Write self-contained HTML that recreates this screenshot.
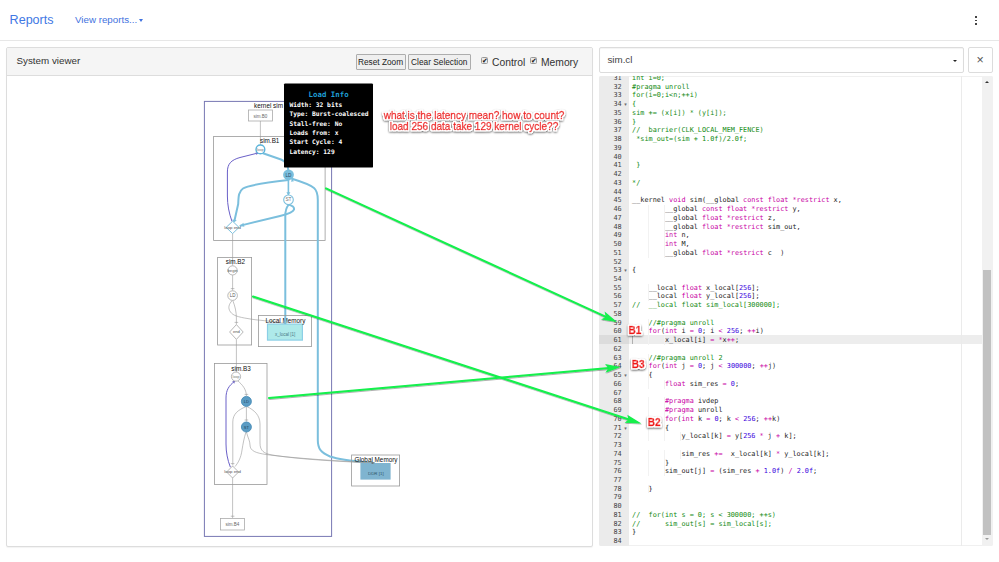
<!DOCTYPE html>
<html lang="en">
<head>
<meta charset="utf-8">
<title>Reports</title>
<style>
*{box-sizing:border-box}
html,body{margin:0;padding:0}
body{width:999px;height:562px;overflow:hidden;background:#fff;position:relative;font-family:"Liberation Sans",Arial,sans-serif;color:#333}
.abs{position:absolute}
#hdr{left:0;top:0;width:999px;height:41px;border-bottom:1px solid #e7e7e7;background:#fff}
#brand{left:9.6px;top:12.8px;font-size:12.55px;line-height:14px;color:#4178e4;white-space:nowrap}
#vr{left:75px;top:14px;font-size:9.75px;line-height:11px;color:#3f72e0;white-space:nowrap}
#vr b{display:inline-block;width:0;height:0;border-left:2.6px solid transparent;border-right:2.6px solid transparent;border-top:3px solid #3f72e0;vertical-align:1.1px;margin-left:2px}
.dot{width:1.8px;height:1.8px;background:#444;left:975.4px}
#lp{left:6px;top:47px;width:587px;height:499.5px;border:1px solid #ddd;border-radius:2px;background:#fff;box-shadow:0 1px 1px rgba(0,0,0,.05)}
#lph{left:0;top:0;width:585px;height:28px;background:#f5f5f5;border-bottom:1px solid #ddd;border-radius:1px 1px 0 0}
#sv{left:9.5px;top:6.6px;font-size:9.8px;line-height:12px;color:#333;white-space:nowrap}
.btn{top:6.2px;height:15.5px;border:1px solid #adadad;background:#efefef;border-radius:1px;font-size:8.3px;line-height:15.2px;color:#222;text-align:center;white-space:nowrap}
.cb{top:9.4px;width:7px;height:7px;border:1px solid #9a9a9a;border-radius:1.5px;background:#eaeaea;font-size:6.5px;line-height:5.4px;font-weight:normal;color:#111;text-align:center;overflow:hidden}
.cbl{top:8.7px;font-size:10.3px;line-height:12px;color:#333;white-space:nowrap}
#sel{left:599px;top:47px;width:365px;height:25.5px;border:1px solid #dcdcdc;border-radius:2px;background:#fff;box-shadow:inset 0 1px 1px rgba(0,0,0,.05)}
#selt{left:7.4px;top:6px;font-size:9.8px;line-height:12px;color:#444}
#selc{left:352.6px;top:11.6px;width:0;height:0;border-left:2.7px solid transparent;border-right:2.7px solid transparent;border-top:2.8px solid #222}
#cls{left:968px;top:47px;width:24.5px;height:25.5px;border:1px solid #dcdcdc;border-radius:2px;background:#fff;text-align:center;font-size:12.5px;line-height:24.4px;color:#555}
#ed{left:599px;top:75.7px;width:393.5px;height:470.3px;border-radius:2px;box-shadow:inset 0 0 0 1px rgba(0,0,0,.06);overflow:hidden;background:#fff;font-family:"DejaVu Sans Mono","Liberation Mono",monospace;font-size:6.84px}
#gut{left:0;top:0;width:29.6px;height:471px;background:#ebebeb}
.g{position:absolute;left:0;width:29.6px;height:8.74px;line-height:8.74px;padding-right:6.9px;text-align:right;color:#444;white-space:nowrap}
#ga{left:0;width:29.6px;height:8.5px;background:#dcdcdc}
.f{position:absolute;right:1.9px;top:0;font-size:5px;font-weight:normal;color:#6a6a6a;font-family:"DejaVu Sans",sans-serif}
.l{position:absolute;left:33.1px;height:8.74px;line-height:8.74px;white-space:pre;color:#1c1c1c}
.l i{font-style:normal}
.c{color:#118a11}.k{color:#c800a4}.n{color:#3a00dc}
#act{left:29.6px;width:353.4px;height:8.5px;background:#ededed}
#pm{left:361.6px;top:0;width:1px;height:471px;background:#ebebeb}
#sb{left:383px;top:0;width:10.5px;height:470px;background:#f1f1f1}
#sbt{left:1.2px;top:194.3px;width:7.6px;height:264.7px;background:#c1c1c1}
.ig{position:absolute;width:1px;height:8.74px;background:#f2f2f2}
#cur{left:33.2px;width:1px;height:8px;background:#b0b0b0}
#ov{left:0;top:0;width:999px;height:562px;pointer-events:none}
</style>
</head>
<body>
<div id="hdr" class="abs"></div>
<div id="brand" class="abs">Reports</div>
<div id="vr" class="abs">View reports...<b></b></div>
<div class="abs dot" style="top:16px"></div>
<div class="abs dot" style="top:19.5px"></div>
<div class="abs dot" style="top:23px"></div>

<div id="lp" class="abs">
  <div id="lph" class="abs">
    <div id="sv" class="abs">System viewer</div>
    <div class="abs btn" style="left:348.5px;width:50px">Reset Zoom</div>
    <div class="abs btn" style="left:401px;width:62.5px">Clear Selection</div>
    <div class="abs cb" style="left:474px">✔</div>
    <div class="abs cbl" style="left:485px">Control</div>
    <div class="abs cb" style="left:523px">✔</div>
    <div class="abs cbl" style="left:534px">Memory</div>
  </div>
</div>

<div id="sel" class="abs"><div id="selt" class="abs">sim.cl</div><div id="selc" class="abs"></div></div>
<div id="cls" class="abs">×</div>

<div id="ed" class="abs">
  <div id="act" class="abs" style="top:259.69px"></div>
  <div id="pm" class="abs"></div>
  <div id="cur" class="abs" style="top:260.49px"></div>
  <div id="gut" class="abs"><div id="ga" class="abs" style="top:259.69px"></div>
<div class="g" style="top:-1.71px">31</div>
<div class="g" style="top:7.03px">32</div>
<div class="g" style="top:15.77px">33</div>
<div class="g" style="top:24.51px">34<b class="f">▾</b></div>
<div class="g" style="top:33.25px">35</div>
<div class="g" style="top:41.99px">36</div>
<div class="g" style="top:50.73px">37</div>
<div class="g" style="top:59.47px">38</div>
<div class="g" style="top:68.21px">39</div>
<div class="g" style="top:76.95px">40</div>
<div class="g" style="top:85.69px">41</div>
<div class="g" style="top:94.43px">42</div>
<div class="g" style="top:103.17px">43</div>
<div class="g" style="top:111.91px">44</div>
<div class="g" style="top:120.65px">45</div>
<div class="g" style="top:129.39px">46</div>
<div class="g" style="top:138.13px">47</div>
<div class="g" style="top:146.87px">48</div>
<div class="g" style="top:155.61px">49</div>
<div class="g" style="top:164.35px">50</div>
<div class="g" style="top:173.09px">51</div>
<div class="g" style="top:181.83px">52</div>
<div class="g" style="top:190.57px">53<b class="f">▾</b></div>
<div class="g" style="top:199.31px">54</div>
<div class="g" style="top:208.05px">55</div>
<div class="g" style="top:216.79px">56</div>
<div class="g" style="top:225.53px">57</div>
<div class="g" style="top:234.27px">58</div>
<div class="g" style="top:243.01px">59</div>
<div class="g" style="top:251.75px">60</div>
<div class="g a" style="top:260.49px">61</div>
<div class="g" style="top:269.23px">62</div>
<div class="g" style="top:277.97px">63</div>
<div class="g" style="top:286.71px">64</div>
<div class="g" style="top:295.45px">65<b class="f">▾</b></div>
<div class="g" style="top:304.19px">66</div>
<div class="g" style="top:312.93px">67</div>
<div class="g" style="top:321.67px">68</div>
<div class="g" style="top:330.41px">69</div>
<div class="g" style="top:339.15px">70</div>
<div class="g" style="top:347.89px">71<b class="f">▾</b></div>
<div class="g" style="top:356.63px">72</div>
<div class="g" style="top:365.37px">73</div>
<div class="g" style="top:374.11px">74</div>
<div class="g" style="top:382.85px">75</div>
<div class="g" style="top:391.59px">76</div>
<div class="g" style="top:400.33px">77</div>
<div class="g" style="top:409.07px">78</div>
<div class="g" style="top:417.81px">79</div>
<div class="g" style="top:426.55px">80</div>
<div class="g" style="top:435.29px">81</div>
<div class="g" style="top:444.03px">82</div>
<div class="g" style="top:452.77px">83</div>
<div class="g" style="top:461.51px">84</div>
  </div>
  <div id="code">
<div class="l" style="top:-1.71px"><i class="c">int i=0;</i></div>
<div class="l" style="top:7.03px"><i class="c">#pragma unroll</i></div>
<div class="l" style="top:15.77px"><i class="c">for(i=0;i&lt;n;++i)</i></div>
<div class="l" style="top:24.51px"><i class="c">{</i></div>
<div class="l" style="top:33.25px"><i class="c">sim += (x[i]) * (y[i]);</i></div>
<div class="l" style="top:41.99px"><i class="c">}</i></div>
<div class="l" style="top:50.73px"><i class="c">//  barrier(CLK_LOCAL_MEM_FENCE)</i></div>
<div class="l" style="top:59.47px"><i class="c"> *sim_out=(sim + 1.0f)/2.0f;</i></div>
<div class="l" style="top:68.21px"></div>
<div class="l" style="top:76.95px"></div>
<div class="l" style="top:85.69px"><i class="c"> }</i></div>
<div class="l" style="top:94.43px"></div>
<div class="l" style="top:103.17px"><i class="c">*/</i></div>
<div class="l" style="top:111.91px"></div>
<div class="l" style="top:120.65px">__kernel <i class="k">void</i> sim(__global <i class="k">const</i> <i class="k">float</i> <i class="k">*</i><i class="k">restrict</i> x,</div>
<div class="l" style="top:129.39px">        __global <i class="k">const</i> <i class="k">float</i> <i class="k">*</i><i class="k">restrict</i> y,</div>
<div class="l" style="top:138.13px">        __global <i class="k">float</i> <i class="k">*</i><i class="k">restrict</i> z,</div>
<div class="l" style="top:146.87px">        __global <i class="k">float</i> <i class="k">*</i><i class="k">restrict</i> sim_out,</div>
<div class="l" style="top:155.61px">        <i class="k">int</i> n,</div>
<div class="l" style="top:164.35px">        <i class="k">int</i> M,</div>
<div class="l" style="top:173.09px">        __global <i class="k">float</i> <i class="k">*</i><i class="k">restrict</i> c  )</div>
<div class="l" style="top:181.83px"></div>
<div class="l" style="top:190.57px">{</div>
<div class="l" style="top:199.31px"></div>
<div class="l" style="top:208.05px">    __local <i class="k">float</i> x_local[<i class="n">256</i>];</div>
<div class="l" style="top:216.79px">    __local <i class="k">float</i> y_local[<i class="n">256</i>];</div>
<div class="l" style="top:225.53px"><i class="c">//  __local float sim_local[300000];</i></div>
<div class="l" style="top:234.27px"></div>
<div class="l" style="top:243.01px">    <i class="c">//#pragma unroll</i></div>
<div class="l" style="top:251.75px">    <i class="k">for</i>(<i class="k">int</i> i <i class="k">=</i> <i class="n">0</i>; i <i class="k">&lt;</i> <i class="n">256</i>; <i class="k">++</i>i)</div>
<div class="l" style="top:260.49px">        x_local[i] <i class="k">=</i> <i class="k">*</i>x<i class="k">++</i>;</div>
<div class="l" style="top:269.23px"></div>
<div class="l" style="top:277.97px">    <i class="c">//#pragma unroll 2</i></div>
<div class="l" style="top:286.71px">    <i class="k">for</i>(<i class="k">int</i> j <i class="k">=</i> <i class="n">0</i>; j <i class="k">&lt;</i> <i class="n">300000</i>; <i class="k">++</i>j)</div>
<div class="l" style="top:295.45px">    {</div>
<div class="l" style="top:304.19px">        <i class="k">float</i> sim_res <i class="k">=</i> <i class="n">0</i>;</div>
<div class="l" style="top:312.93px"></div>
<div class="l" style="top:321.67px">        <i class="k">#pragma</i> ivdep</div>
<div class="l" style="top:330.41px">        <i class="k">#pragma</i> unroll</div>
<div class="l" style="top:339.15px">        <i class="k">for</i>(<i class="k">int</i> k <i class="k">=</i> <i class="n">0</i>; k <i class="k">&lt;</i> <i class="n">256</i>; <i class="k">++</i>k)</div>
<div class="l" style="top:347.89px">        {</div>
<div class="l" style="top:356.63px">            y_local[k] <i class="k">=</i> y[<i class="n">256</i> <i class="k">*</i> j <i class="k">+</i> k];</div>
<div class="l" style="top:365.37px"></div>
<div class="l" style="top:374.11px">            sim_res <i class="k">+=</i>  x_local[k] <i class="k">*</i> y_local[k];</div>
<div class="l" style="top:382.85px">        }</div>
<div class="l" style="top:391.59px">        sim_out[j] <i class="k">=</i> (sim_res <i class="k">+</i> <i class="n">1.0f</i>) <i class="k">/</i> <i class="n">2.0f</i>;</div>
<div class="l" style="top:400.33px"></div>
<div class="l" style="top:409.07px">    }</div>
<div class="l" style="top:417.81px"></div>
<div class="l" style="top:426.55px"></div>
<div class="l" style="top:435.29px"><i class="c">//  for(int s = 0; s &lt; 300000; ++s)</i></div>
<div class="l" style="top:444.03px"><i class="c">//      sim_out[s] = sim_local[s];</i></div>
<div class="l" style="top:452.77px">}</div>
<div class="l" style="top:461.51px"></div>
<b class="ig" style="left:48.52px;top:129.39px"></b><b class="ig" style="left:64.94px;top:129.39px"></b><b class="ig" style="left:48.52px;top:138.13px"></b><b class="ig" style="left:64.94px;top:138.13px"></b><b class="ig" style="left:48.52px;top:146.87px"></b><b class="ig" style="left:64.94px;top:146.87px"></b><b class="ig" style="left:48.52px;top:155.61px"></b><b class="ig" style="left:64.94px;top:155.61px"></b><b class="ig" style="left:48.52px;top:164.35px"></b><b class="ig" style="left:64.94px;top:164.35px"></b><b class="ig" style="left:48.52px;top:173.09px"></b><b class="ig" style="left:64.94px;top:173.09px"></b><b class="ig" style="left:48.52px;top:208.05px"></b><b class="ig" style="left:48.52px;top:216.79px"></b><b class="ig" style="left:48.52px;top:243.01px"></b><b class="ig" style="left:48.52px;top:251.75px"></b><b class="ig" style="left:48.52px;top:260.49px"></b><b class="ig" style="left:64.94px;top:260.49px"></b><b class="ig" style="left:48.52px;top:277.97px"></b><b class="ig" style="left:48.52px;top:286.71px"></b><b class="ig" style="left:48.52px;top:295.45px"></b><b class="ig" style="left:48.52px;top:304.19px"></b><b class="ig" style="left:64.94px;top:304.19px"></b><b class="ig" style="left:48.52px;top:321.67px"></b><b class="ig" style="left:64.94px;top:321.67px"></b><b class="ig" style="left:48.52px;top:330.41px"></b><b class="ig" style="left:64.94px;top:330.41px"></b><b class="ig" style="left:48.52px;top:339.15px"></b><b class="ig" style="left:64.94px;top:339.15px"></b><b class="ig" style="left:48.52px;top:347.89px"></b><b class="ig" style="left:64.94px;top:347.89px"></b><b class="ig" style="left:48.52px;top:356.63px"></b><b class="ig" style="left:64.94px;top:356.63px"></b><b class="ig" style="left:81.36px;top:356.63px"></b><b class="ig" style="left:48.52px;top:374.11px"></b><b class="ig" style="left:64.94px;top:374.11px"></b><b class="ig" style="left:81.36px;top:374.11px"></b><b class="ig" style="left:48.52px;top:382.85px"></b><b class="ig" style="left:64.94px;top:382.85px"></b><b class="ig" style="left:48.52px;top:391.59px"></b><b class="ig" style="left:64.94px;top:391.59px"></b><b class="ig" style="left:48.52px;top:409.07px"></b>
  </div>
  <div id="sb" class="abs"><div id="sbt" class="abs"></div>
    <div class="abs" style="left:2.5px;top:4.9px;width:0;height:0;border-left:2.7px solid transparent;border-right:2.7px solid transparent;border-bottom:2.8px solid #333"></div>
    <div class="abs" style="left:2.5px;top:462.2px;width:0;height:0;border-left:2.7px solid transparent;border-right:2.7px solid transparent;border-top:2.8px solid #999"></div>
  </div>
</div>

<svg id="ov" class="abs" width="999" height="562" viewBox="0 0 999 562">
<defs>
<filter id="sh" x="-10%" y="-30%" width="120%" height="170%"><feDropShadow dx="0.7" dy="0.9" stdDeviation="0.7" flood-color="#000" flood-opacity="0.45"/></filter>
<filter id="sh2" x="-5%" y="-5%" width="110%" height="110%"><feDropShadow dx="0.6" dy="0.9" stdDeviation="0.6" flood-color="#000" flood-opacity="0.35"/></filter>
<filter id="ol" x="-5%" y="-5%" width="110%" height="110%">
<feMorphology in="SourceAlpha" operator="dilate" radius="1.2" result="d"/>
<feGaussianBlur in="d" stdDeviation="0.35" result="db"/>
<feComponentTransfer in="db" result="dc"><feFuncA type="linear" slope="2.2" intercept="0"/></feComponentTransfer>
<feFlood flood-color="#fff"/><feComposite in2="dc" operator="in" result="w"/>
<feGaussianBlur in="d" stdDeviation="1" result="sb"/>
<feOffset in="sb" dx="0.4" dy="1.2" result="so"/>
<feComponentTransfer in="so" result="s"><feFuncA type="linear" slope="0.8"/></feComponentTransfer>
<feMerge><feMergeNode in="s"/><feMergeNode in="w"/><feMergeNode in="SourceGraphic"/></feMerge>
</filter>
</defs>
<g font-family="'Liberation Sans',Arial,sans-serif" fill="none">
<!-- kernel box -->
<rect x="204.4" y="101.4" width="127.2" height="435" stroke="#7777b3" stroke-width="1"/>
<text x="268.5" y="108.2" font-size="6.35" fill="#111" text-anchor="middle">kernel sim</text>
<!-- sim.B0 -->
<rect x="248.4" y="110" width="24" height="11" stroke="#aaa" stroke-width=".8" fill="#fff"/>
<text x="260.4" y="117.5" font-size="4.5" fill="#666" text-anchor="middle">sim.B0</text>
<path d="M260.4 121V145" stroke="#999" stroke-width=".6"/>
<!-- sim.B1 -->
<rect x="213.6" y="136.4" width="111.5" height="104" stroke="#999" stroke-width=".8"/>
<text x="269.7" y="142.8" font-size="6.35" fill="#111" text-anchor="middle">sim.B1</text>
<!-- thick light blue edges B1 -->
<g stroke="#7bbfdd" stroke-width="2" stroke-linecap="round" stroke-linejoin="round">
<path d="M263 153.2L281 159.5C286 161.5 288 165 288.3 170"/>
<path d="M288.4 180C262 183 247 186 243 188.5C238.5 191.5 238.5 197 238.2 204L234.5 220.5"/>
<path d="M292 178.8C304 182.5 311 185.5 314 188C317.5 191 317.8 195 317.8 200V440C317.8 449 321 452.5 330 456.5C342 460.5 358 461.5 374 463"/>
<path d="M288.4 180V194.5" stroke-width="1.6"/>
<path d="M288.6 204.6C292 205.5 294.5 207 294 209.5C293.5 212 288 214 280 216L240.5 225.6"/>
<path d="M288.4 205C286 208 285.3 211 285.3 216V324"/>
</g>
<!-- arrow heads light blue -->
<path d="M286.4 192.2L288.4 195.2L290.4 192.2Z" fill="#7bbfdd"/>
<path d="M232.2 219.4L233.8 222.6L236.8 220.2Z" fill="#7bbfdd"/>
<path d="M243.4 222.8L239.8 225.9L244.4 226.8Z" fill="#7bbfdd"/>
<path d="M291 181.8L292 178.8L294 181.2Z" fill="#7bbfdd"/>
<!-- purple back-edge B1 -->
<path d="M232 221.5C229 213 227.4 205 227.4 196V172C227.4 164 231 160 240 157.5L258 153" stroke="#6a60c8" stroke-width="1"/>
<path d="M255.6 152.2L258.8 152.8L256.4 155Z" fill="#7b74c8"/>
<!-- nodes B1 -->
<circle cx="260.4" cy="149.4" r="4.4" fill="#fff" stroke="#5ab4da" stroke-width="1.4"/>
<text x="260.4" y="150.6" font-size="3.6" fill="#777" text-anchor="middle">loop</text>
<circle cx="288.5" cy="174.8" r="5.4" fill="#7bbfdd"/>
<text x="288.5" y="176.5" font-size="4.6" fill="#2b4a66" text-anchor="middle">LD</text>
<circle cx="288.5" cy="199.8" r="4.8" fill="#fff" stroke="#7bbfdd" stroke-width="1.1"/>
<text x="288.5" y="201.4" font-size="4.8" fill="#777" text-anchor="middle">ST</text>
<path d="M232.6 221.2L239 227.4L232.6 233.6L226.2 227.4Z" fill="#fff" stroke="#7bbfdd" stroke-width="1"/>
<text x="232.6" y="228.6" font-size="4.3" fill="#555" text-anchor="middle">loop end</text>
<path d="M232.6 233.8V265.6" stroke="#999" stroke-width=".6"/>
<!-- sim.B2 -->
<rect x="217.6" y="257.4" width="34" height="87.6" stroke="#999" stroke-width=".8"/>
<text x="235.4" y="263.8" font-size="6.35" fill="#111" text-anchor="middle">sim.B2</text>
<g stroke="#999" stroke-width=".6">
<path d="M232.6 275.2V290.6"/>
<path d="M232.8 300.6C235 306 236.4 312 236.4 318V324.4"/>
<path d="M285 323.6C270 320.5 258 320.6 248 318.6C238 317 233 315.5 230.5 312C227.5 308 229 304 232 300.8"/>
<path d="M236.4 339.6V372"/>
<path d="M230.8 288.6H234.4M234.6 322.4H238.2"/>
</g>
<circle cx="232.6" cy="270.4" r="4.6" fill="#fff" stroke="#999" stroke-width=".7"/>
<text x="232.6" y="271.6" font-size="4.1" fill="#555" text-anchor="middle">begin</text>
<circle cx="232.6" cy="295.6" r="4.8" fill="#fff" stroke="#999" stroke-width=".7"/>
<text x="232.6" y="297.2" font-size="4.5" fill="#555" text-anchor="middle">LD</text>
<path d="M236.4 324.6L243.2 332L236.4 339.4L229.6 332Z" fill="#fff" stroke="#999" stroke-width=".7"/>
<text x="236.4" y="333.2" font-size="4.2" fill="#555" text-anchor="middle">end</text>
<!-- Local memory -->
<rect x="258.4" y="315.4" width="53" height="31.2" stroke="#999" stroke-width=".8"/>
<rect x="267.5" y="324.1" width="34.9" height="16" fill="#aeeaea" stroke="#8ccfe6" stroke-width="1.2"/>
<text x="285.4" y="322.6" font-size="6.35" fill="#111" text-anchor="middle">Local Memory</text>
<text x="285.2" y="335.9" font-size="4.5" fill="#4a7a88" text-anchor="middle">x_local [1]</text>
<path d="M285.3 318V324" stroke="#7bbfdd" stroke-width="2"/>
<!-- sim.B3 -->
<rect x="214.4" y="363.4" width="52.6" height="121" stroke="#999" stroke-width=".8"/>
<text x="241" y="370.6" font-size="6.35" fill="#111" text-anchor="middle">sim.B3</text>
<g stroke="#999" stroke-width=".6">
<path d="M238 381C242 384.5 246.4 389 246.4 396"/>
<path d="M246.4 406.6V421.6"/>
<path d="M246 406.6C238 410 232.8 414 232.8 422V465.6"/>
<path d="M247 406.6C254 410 260 415 260 424V443C260 451 264 453.5 272 455C300 459.5 340 461.5 374 463"/>
<path d="M246.4 432C248 438 250 441 250 445C250 451 256 453 266 454.5C295 458.5 340 461 374 463"/>
<path d="M246 432C244 438 243 444 242 450C241 458 238 463 235 466.6"/>
<path d="M232.6 478V518"/>
<path d="M244.6 394.4H248.2M244.6 420H248.2M230.8 463.6H234.4M230.8 516.2H234.4"/>
</g>
<path d="M230.4 467.2C227.5 460 226 452 226 444V398C226 390 229 385.5 234.6 381.4" stroke="#6a60c8" stroke-width="1"/>
<path d="M232.2 381L235.4 380.8L234.2 383.8Z" fill="#7b74c8"/>
<circle cx="236" cy="376.6" r="4.6" fill="#fff" stroke="#999" stroke-width=".7"/>
<text x="236" y="377.8" font-size="3.6" fill="#777" text-anchor="middle">loop</text>
<circle cx="246.4" cy="401.4" r="5" fill="#5b9cc4" stroke="#3f86b4" stroke-width=".8"/>
<text x="246.4" y="402.9" font-size="4" fill="#1d3f5a" text-anchor="middle">LD</text>
<circle cx="246.4" cy="427" r="5" fill="#5b9cc4" stroke="#3f86b4" stroke-width=".8"/>
<text x="246.4" y="428.5" font-size="4" fill="#1d3f5a" text-anchor="middle">ST</text>
<path d="M232.6 466L238.6 472L232.6 478L226.6 472Z" fill="#fff" stroke="#999" stroke-width=".7"/>
<text x="232.6" y="473.2" font-size="4.3" fill="#555" text-anchor="middle">loop end</text>
<!-- sim.B4 -->
<rect x="220.4" y="518.4" width="24" height="11.6" stroke="#aaa" stroke-width=".8" fill="#fff"/>
<text x="232.4" y="526.2" font-size="4.5" fill="#666" text-anchor="middle">sim.B4</text>
<!-- Global memory -->
<rect x="351.6" y="455" width="48" height="31" stroke="#999" stroke-width=".8"/>
<rect x="360.4" y="463" width="30.2" height="16.6" fill="#7fb4d0"/>
<text x="376" y="461.8" font-size="6.35" fill="#111" text-anchor="middle">Global Memory</text>
<text x="375.8" y="474.6" font-size="4.4" fill="#2f556b" text-anchor="middle">DDR [1]</text>
<path d="M371.6 462L374.8 463.1L371.6 464Z" fill="#666"/>
</g>
<!-- tooltip -->
<rect x="284" y="83.4" width="89" height="84.2" rx="1.2" fill="#000"/>
<g font-family="'DejaVu Sans Mono','Liberation Mono',monospace" font-weight="bold" fill="#fff" font-size="6.27">
<text x="328.6" y="96.8" font-size="7.4" fill="#1f9fd6" text-anchor="middle">Load Info</text>
<text x="289.4" y="106.7">Width: 32 bits</text>
<text x="289.4" y="116.3">Type: Burst-coalesced</text>
<text x="289.4" y="125.5">Stall-free: No</text>
<text x="289.4" y="134.9">Loads from: x</text>
<text x="289.4" y="144">Start Cycle: 4</text>
<text x="289.4" y="153.6">Latency: 129</text>
</g>
<!-- green arrows -->
<g filter="url(#sh2)" stroke="#12f04c" stroke-width="2.1" stroke-linecap="round" fill="#12f04c">
<path d="M326 188.4L606 316.9"/>
<path d="M253 296.6L629 419.5"/>
<path d="M269 398L609 368"/>
</g>
<g filter="url(#sh2)" fill="#12f04c">
<path d="M617 321.9L601 319.6L605.8 317L604.6 311.6Z"/>
<path d="M641.4 423.6L624.6 422.8L628.6 419.4L627.3 414.8Z"/>
<path d="M620.6 366.9L605.4 372.8L608.4 368L605 364.1Z"/>
</g>
<!-- annotations -->
<g font-family="'Liberation Sans',Arial,sans-serif" fill="#f01818" stroke="#f01818" stroke-width=".5" stroke-linejoin="round" filter="url(#ol)">
<text x="474" y="118.5" font-size="10" text-anchor="middle">what is the latency mean? how to count?</text>
<text x="474" y="129.5" font-size="10" text-anchor="middle">load 256 data take 129 kernel cycle??</text>
<g font-weight="bold" font-size="10">
<text x="628.6" y="333.9">B1</text>
<text x="631.8" y="367.8">B3</text>
<text x="647.8" y="425.7">B2</text>
</g>
</g>

</svg>
</body>
</html>
